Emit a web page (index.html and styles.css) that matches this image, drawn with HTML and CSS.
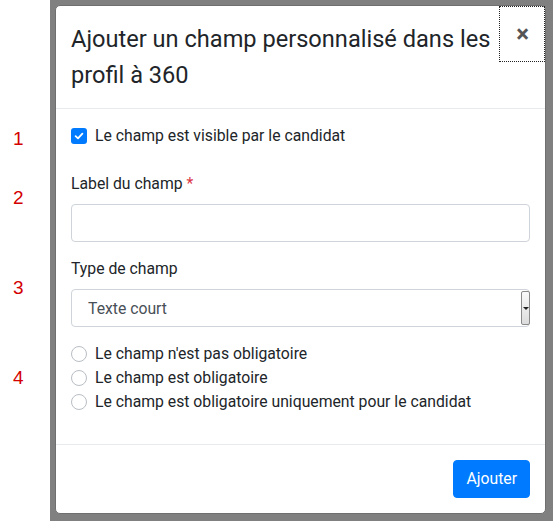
FILE: index.html
```html
<!DOCTYPE html>
<html lang="fr">
<head>
  <meta charset="UTF-8">
  <title>Champ personnalisé</title>
  <link rel="stylesheet" href="styles.css">
</head>
<body>
  <!-- Annotations on the left -->
  <div class="notes">
    <span class="note note-1">1</span>
    <span class="note note-2">2</span>
    <span class="note note-3">3</span>
    <span class="note note-4">4</span>
  </div>

  <div class="backdrop">
    <div class="modal">
      <div class="modal-header">
        <h4 class="modal-title">Ajouter un champ personnalisé dans les profil à 360</h4>
        <button class="close" type="button">&times;</button>
      </div>

      <div class="modal-body">
        <div class="form-group group-visible">
          <label class="check-row">
            <span class="checkbox">
              <svg width="10" height="10" viewBox="0 0 10 10"><path d="M1.6 5.2 L4 7.4 L8.4 2.6" fill="none" stroke="#fff" stroke-width="1.8" stroke-linecap="round" stroke-linejoin="round"/></svg>
            </span>
            Le champ est visible par le candidat
          </label>
        </div>

        <div class="form-group">
          <label class="field-label">Label du champ <span class="required">*</span></label>
          <input class="form-control" type="text">
        </div>

        <div class="form-group">
          <label class="field-label">Type de champ</label>
          <div class="select-wrap">
            <select class="form-control select">
              <option>Texte court</option>
            </select>
            <span class="select-arrow"></span>
          </div>
        </div>

        <div class="form-group group-radios">
          <label class="check-row"><span class="radio"></span>Le champ n'est pas obligatoire</label>
          <label class="check-row"><span class="radio"></span>Le champ est obligatoire</label>
          <label class="check-row"><span class="radio"></span>Le champ est obligatoire uniquement pour le candidat</label>
        </div>
      </div>

      <div class="modal-footer">
        <button class="btn-primary" type="button">Ajouter</button>
      </div>
    </div>
  </div>
</body>
</html>
```

FILE: styles.css
```css
/* Reset */
* {
  margin: 0;
  padding: 0;
  box-sizing: border-box;
}

body {
  display: flex;
  height: 521px;
  overflow: hidden;
  background-color: #fff;
  font-family: 'Roboto', 'Liberation Sans', sans-serif;
  color: #212529;
}

/* Red step numbers */
.notes {
  width: 50px;
  display: flex;
  flex-direction: column;
  padding-left: 13px;
}

.note {
  font-family: 'Liberation Sans', Arial, sans-serif;
  font-size: 19px;
  line-height: 24px;
  color: #d40000;
}

.note-1 { margin-top: 127px; }
.note-2 { margin-top: 35px; }
.note-3 { margin-top: 66px; }
.note-4 { margin-top: 66px; }

.backdrop {
  flex: 1;
  background-color: #808080;
  padding: 5px 7px 7px 5px;
}

.modal {
  width: 491px;
  background-color: #fff;
  border: 1px solid #6f6f6f;
  border-radius: 5px;
}

.modal-header {
  display: flex;
  align-items: flex-start;
  padding: 15px 15px;
  border-bottom: 1px solid #e9ecef;
}

.modal-title {
  flex: 1;
  font-size: 23.6px;
  font-weight: 400;
  line-height: 36px;
}

.close {
  margin: -15px -15px -15px auto;
  padding: 16px 16px 16px 17px;
  border: 0;
  background: none;
  font-family: 'Roboto', sans-serif;
  font-size: 24px;
  font-weight: 700;
  line-height: 1;
  color: #555;
  outline: 1px dotted #222;
  outline-offset: -1px;
}

.modal-body {
  padding: 15px 15px;
  font-size: 15.75px;
  line-height: 24px;
}

.form-group {
  margin-bottom: 15px;
}

.group-visible {
  margin-bottom: 24px;
}

.group-radios {
  margin-bottom: 15px;
}

.field-label {
  display: block;
  margin-bottom: 8px;
}

.required {
  color: #dc3545;
}

.form-control {
  display: block;
  width: 100%;
  height: 38px;
  padding: 6px 12px;
  font-family: inherit;
  font-size: 15.75px;
  color: #495057;
  background-color: #fff;
  border: 1px solid #ced4da;
  border-radius: 4px;
}

.select-wrap {
  position: relative;
}

.select {
  appearance: none;
  padding-left: 16px;
}

/* old-style native dropdown button on the right */
.select-arrow {
  position: absolute;
  right: 0;
  top: 2px;
  bottom: 2px;
  width: 9px;
  border: 1px solid #8a8a8a;
  border-radius: 2px;
  background: linear-gradient(#fafafa, #dcdcdc);
}

.select-arrow::after {
  content: '';
  position: absolute;
  left: 1px;
  top: 15px;
  border-left: 3px solid transparent;
  border-right: 3px solid transparent;
  border-top: 3px solid #222;
}

.check-row {
  display: flex;
  align-items: center;
  gap: 8px;
  color: #212529;
}

.checkbox {
  width: 16px;
  height: 16px;
  display: flex;
  align-items: center;
  justify-content: center;
  background-color: #007bff;
  border-radius: 3px;
}

.radio {
  width: 16px;
  height: 16px;
  border: 1px solid #b8bec4;
  border-radius: 50%;
  background-color: #fff;
}

.modal-footer {
  display: flex;
  justify-content: flex-end;
  padding: 15px 15px;
  border-top: 1px solid #e9ecef;
}

.btn-primary {
  height: 38px;
  padding: 6px 12px;
  font-family: inherit;
  font-size: 15.75px;
  line-height: 24px;
  color: #fff;
  background-color: #007bff;
  border: 1px solid #007bff;
  border-radius: 4px;
}
```
